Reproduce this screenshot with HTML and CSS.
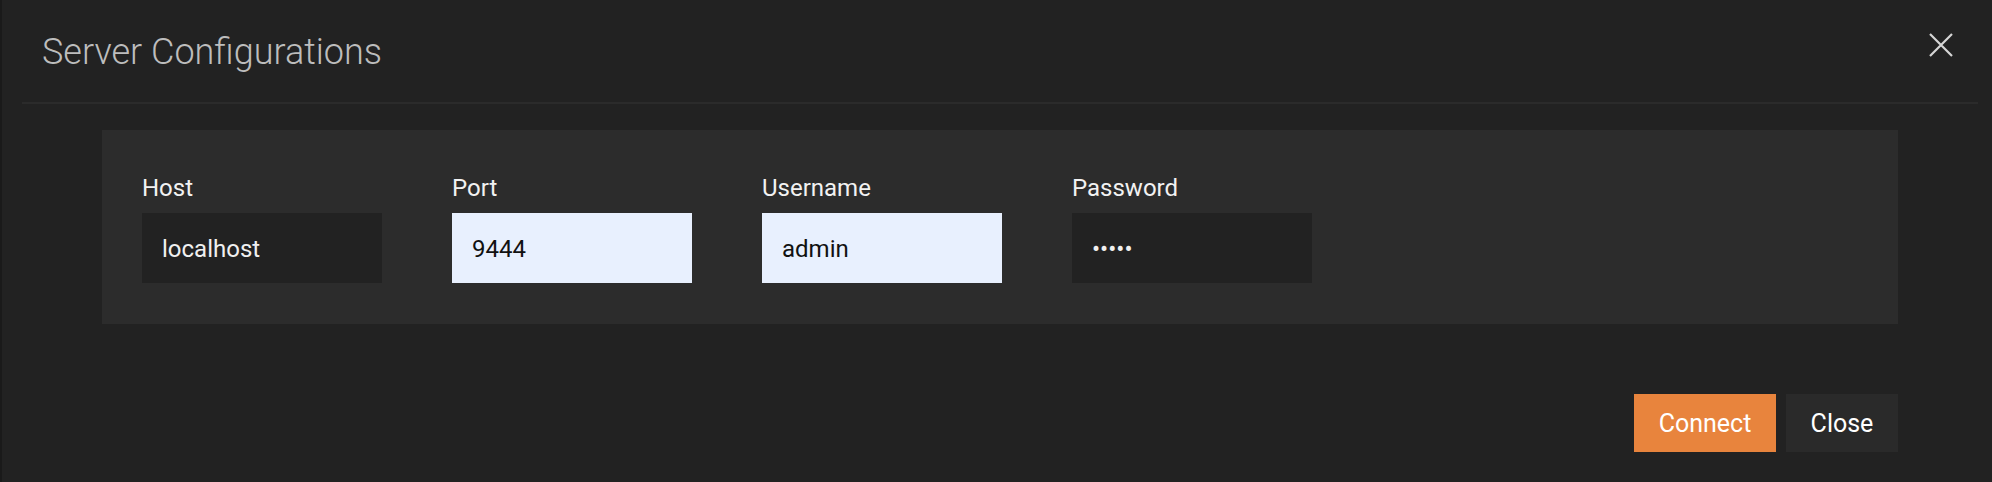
FILE: index.html
```html
<!DOCTYPE html>
<html lang="en">
<head>
<meta charset="utf-8">
<title>Server Configurations</title>
<link rel="stylesheet" href="styles.css">
</head>
<body>
<div class="dialog">
  <div class="header">
    <h1 class="title">Server Configurations</h1>
    <button class="close-x" aria-label="Close">
      <svg width="24" height="24" viewBox="0 0 24 24"><path d="M1 1L23 23M23 1L1 23" stroke="#d6d6d6" stroke-width="2.2" fill="none"/></svg>
    </button>
  </div>
  <div class="separator"></div>
  <div class="panel">
    <div class="field">
      <label class="label">Host</label>
      <input class="input" type="text" value="localhost">
    </div>
    <div class="field">
      <label class="label">Port</label>
      <input class="input autofill" type="text" value="9444">
    </div>
    <div class="field">
      <label class="label">Username</label>
      <input class="input autofill" type="text" value="admin">
    </div>
    <div class="field">
      <label class="label">Password</label>
      <input class="input" type="password" value="admin">
    </div>
  </div>
  <div class="footer">
    <button class="btn btn-primary">Connect</button>
    <button class="btn btn-secondary">Close</button>
  </div>
</div>
</body>
</html>
```
FILE: styles.css
```css
html, body {
  margin: 0;
  padding: 0;
  background: #222222;
}
body {
  font-family: Roboto, "Liberation Sans", sans-serif;
}
.dialog {
  box-sizing: border-box;
  height: 482px;
  border-left: 2px solid #1a1a1a;
  background: #222222;
  overflow: hidden;
}
.header {
  display: flex;
  justify-content: space-between;
  align-items: flex-start;
  padding: 32px 39px 30px 40px;
}
.title {
  margin: 0;
  font-size: 36px;
  line-height: 40px;
  font-weight: 300;
  color: #bdbdbd;
}
.close-x {
  margin-top: 1px;
  padding: 0;
  border: none;
  background: none;
  width: 24px;
  height: 24px;
  display: block;
}
.close-x svg { display: block; }
.separator {
  height: 2px;
  margin: 0 14px 0 20px;
  background: #2b2b2b;
}
.panel {
  box-sizing: border-box;
  height: 194px;
  margin: 26px 94px 0 100px;
  padding: 44px 40px 41px;
  background: #2c2c2c;
  display: flex;
  gap: 70px;
}
.field {
  display: flex;
  flex-direction: column;
  gap: 11px;
}
.label {
  font-size: 24px;
  line-height: 28px;
  color: #f2f2f2;
}
.input {
  box-sizing: border-box;
  width: 240px;
  height: 70px;
  padding: 2px 20px 0;
  border: none;
  outline: none;
  background: #222222;
  color: #f0f0f0;
  font-family: Roboto, "Liberation Sans", sans-serif;
  font-size: 24px;
}
.input.autofill {
  background: #e8f0fe;
  color: #111111;
}
.footer {
  display: flex;
  justify-content: flex-end;
  gap: 10px;
  margin: 70px 94px 0 0;
}
.btn {
  height: 58px;
  border: none;
  padding: 0;
  font-family: Roboto, "Liberation Sans", sans-serif;
  font-size: 25px;
  color: #ffffff;
}
.btn-primary {
  width: 142px;
  background: #e8843d;
}
.btn-secondary {
  width: 112px;
  background: #2a2a2a;
}
```
